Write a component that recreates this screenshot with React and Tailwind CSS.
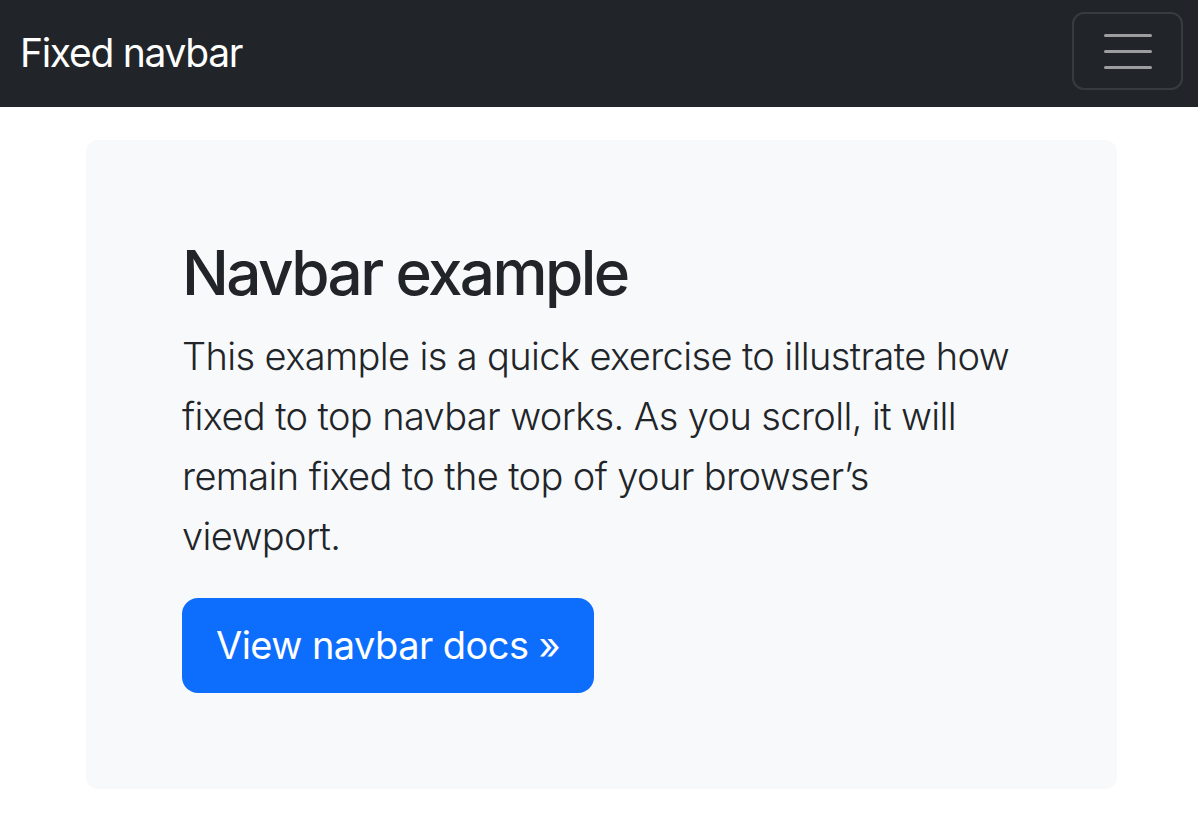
import React from "react";

const App = () => {
  return (
    <div className="min-h-screen bg-white font-['Inter','Liberation_Sans',sans-serif] text-[#212529]">
      {/* Navbar */}
      <nav className="h-[107px] bg-[#212529] flex justify-between pl-[20px] pr-[15px]">
        <a href="#" className="self-center text-white text-[39px] leading-none tracking-[-1.3px] -mt-[2px]">
          Fixed navbar
        </a>
        <button className="mt-[12px] w-[111px] h-[78px] rounded-[12px] border-2 border-white/10 flex flex-col items-center justify-center gap-[13px]">
          <span className="block w-[48px] h-[3px] bg-white/55 rounded-full"></span>
          <span className="block w-[48px] h-[3px] bg-white/55 rounded-full"></span>
          <span className="block w-[48px] h-[3px] bg-white/55 rounded-full"></span>
        </button>
      </nav>

      {/* Jumbotron */}
      <main className="pt-[33px] pl-[86px] pr-[81px] pb-8">
        <div className="bg-[#f8f9fa] rounded-[12px] p-[96px] pr-[80px]">
          <h1 className="text-[62px] leading-[1.2] font-medium tracking-[-2.6px] mb-[16px]">
            Navbar example
          </h1>
          <p className="text-[38px] leading-[60px] font-light tracking-[-0.62px] mb-[32px]">
            This example is a quick exercise to illustrate how fixed to top navbar works. As you scroll, it will remain fixed to the top of your browser’s viewport.
          </p>
          <a
            href="#"
            className="inline-flex items-center h-[95px] px-[34px] bg-[#0d6efd] text-white text-[38px] tracking-[-0.55px] rounded-[16px]"
          >
            View navbar docs »
          </a>
        </div>
      </main>
    </div>
  );
};

export default App;
